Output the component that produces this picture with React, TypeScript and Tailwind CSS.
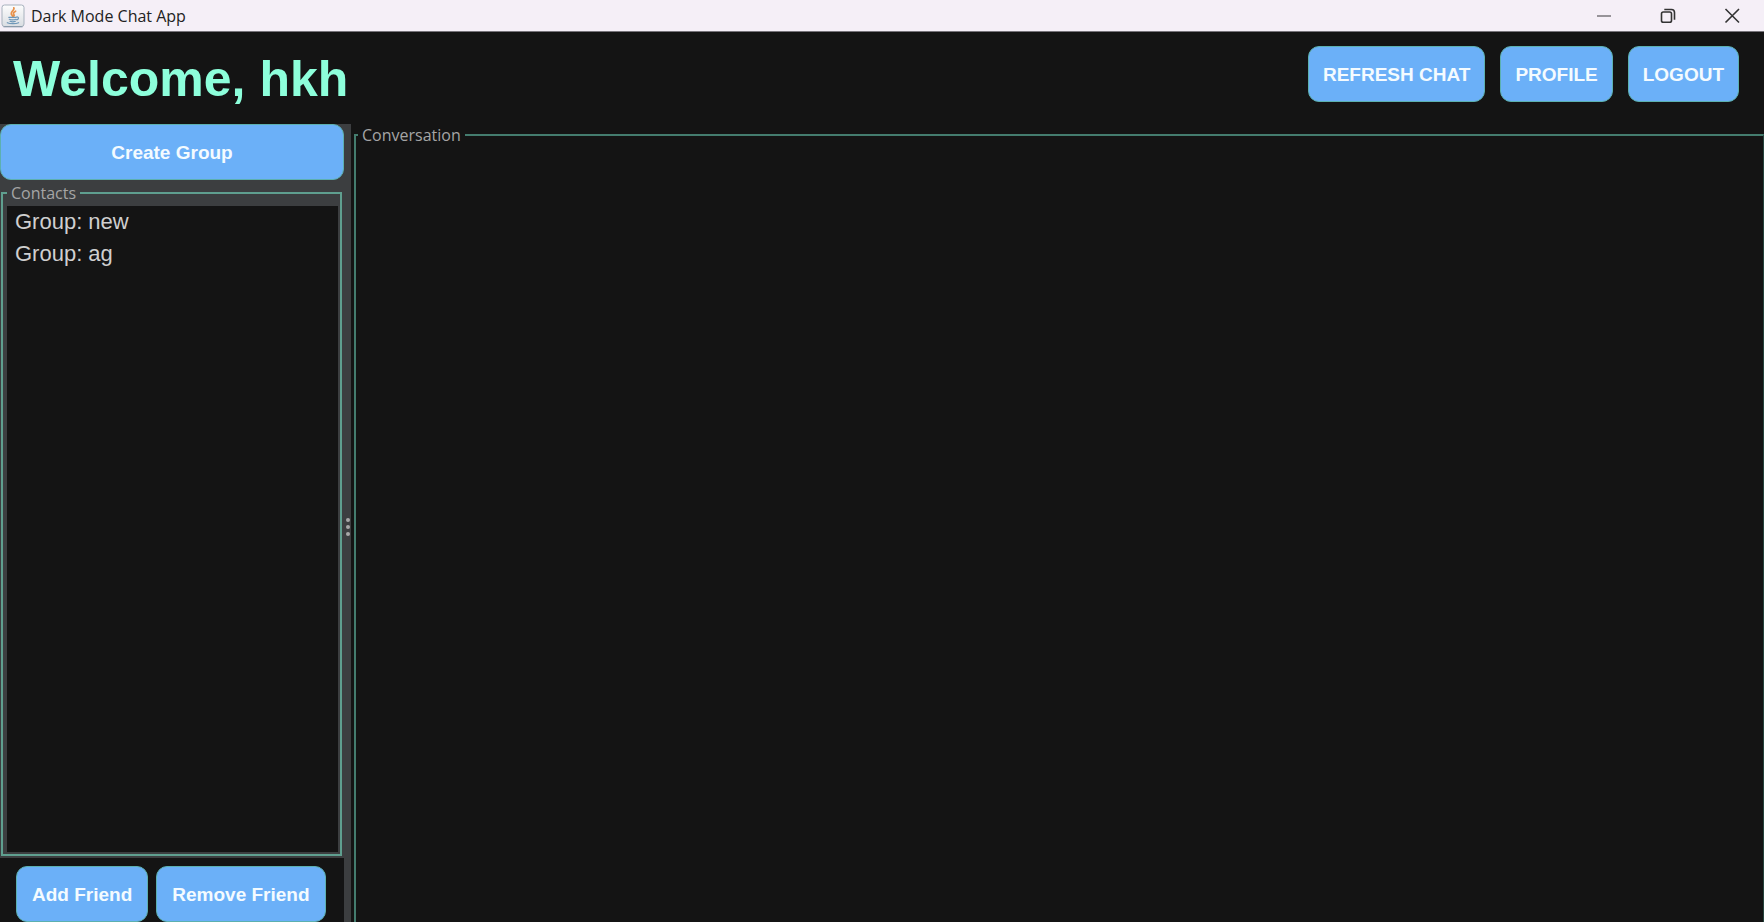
import React, { useState } from 'react';
import clsx from 'clsx';

const CONTACTS = ['Group: new', 'Group: ag'];

const ChatButton: React.FC<{ children: React.ReactNode; className?: string }> = ({ children, className }) => (
    <button
        type="button"
        className={clsx(
            'h-14 rounded-[11px] border border-[#5cb0b0] bg-[#6bb0f8] pt-0.5 text-[19px] font-bold leading-6 text-[#f4fbff]',
            className
        )}
    >
        {children}
    </button>
);

const JavaIcon: React.FC = () => (
    <svg width="24" height="24" viewBox="0 0 24 24" fill="none" aria-hidden="true">
        <defs>
            <linearGradient id="tile" x1="0" y1="0" x2="0" y2="1">
                <stop offset="0" stopColor="#fdfdfd" />
                <stop offset="1" stopColor="#d9dde2" />
            </linearGradient>
        </defs>
        <rect x="1" y="1" width="22" height="21.5" rx="2.5" fill="url(#tile)" stroke="#a7b1bd" />
        <path d="M2.5 22.800h19" stroke="#7f90a3" />
        <path d="M12.800 3.800c1.400 2.200-3.400 3.600-2.600 6 .3.900 1.200 1.700 1.500 2.600M14.600 7.200c-2 1-2.800 2-1.700 3.300.5.700.3 1.300-.3 1.900" stroke="#e8914a" strokeWidth="1.700" strokeLinecap="round" />
        <path d="M7.800 13.300h7.400M8.300 15.300c1.800.8 4.800.7 6.700 0M9 17.300c1.600.6 3.900.6 5.400 0M15.500 13c2.600-.5 2.600 2.200.3 2.900" stroke="#6f97b8" strokeWidth="1.200" strokeLinecap="round" />
        <path d="M6.300 18.700c2.600 1.300 8.700 1.300 11.300 0" stroke="#6f97b8" strokeWidth="1.200" strokeLinecap="round" />
    </svg>
);

const TitleBar: React.FC = () => (
    <div className="flex h-8 shrink-0 items-center justify-between border-b border-[#77747a] bg-[#f5eff7] pl-px">
        <div className="flex items-center gap-1.5">
            <JavaIcon />
            <span className="font-['Open_Sans',sans-serif] text-base leading-6 text-[#222]">Dark Mode Chat App</span>
        </div>
        <div className="flex h-full text-[#333]">
            <button type="button" aria-label="Minimize" className="flex w-16 items-center justify-center">
                <svg width="16" height="16" viewBox="0 0 16 16" stroke="#77747a" strokeWidth="1.5"><path d="M1 8h14" /></svg>
            </button>
            <button type="button" aria-label="Restore" className="flex w-16 items-center justify-center">
                <svg width="16" height="16" viewBox="0 0 16 16" fill="none" stroke="currentColor" strokeWidth="1.6">
                    <rect x="1.5" y="4" width="10" height="10.300" rx="1.800" />
                    <path d="M4.300 1.500h7.200a3 3 0 0 1 3 3v7.200" />
                </svg>
            </button>
            <button type="button" aria-label="Close" className="flex w-16 items-center justify-center">
                <svg width="16" height="16" viewBox="0 0 16 16" stroke="currentColor" strokeWidth="1.6"><path d="M1.500 1l13.500 13.500M15 1L1.500 14.500" /></svg>
            </button>
        </div>
    </div>
);

const Sidebar: React.FC = () => {
    const [selected, setSelected] = useState<string | null>(null);

    return (
        <aside className="flex w-[344px] shrink-0 flex-col bg-[#3c3e40]">
            <ChatButton className="mb-0.5 shrink-0">Create Group</ChatButton>
            <fieldset className="mb-0.5 ml-px mr-0.5 flex min-h-0 flex-1 flex-col border-2 border-[#5f9f8f] pb-0.5 pl-1 pr-0.5 pt-0.5">
                <legend className="px-1 font-['Open_Sans',sans-serif] text-base leading-[22px] text-[#a5a5a5]">Contacts</legend>
                <ul className="flex-1 overflow-y-auto bg-[#141414]">
                    {CONTACTS.map(name => (
                        <li key={name}>
                            <button
                                type="button"
                                onClick={() => setSelected(name)}
                                className={clsx('block h-8 w-full px-2 text-left text-[22px] leading-8 text-[#cfcfcf]', selected === name && 'bg-[#2d4a63]')}
                            >
                                {name}
                            </button>
                        </li>
                    ))}
                </ul>
            </fieldset>
            <div className="flex shrink-0 gap-2 bg-[#141414] pl-4 pt-2">
                <ChatButton className="px-[15px]">Add Friend</ChatButton>
                <ChatButton className="px-[15px]">Remove Friend</ChatButton>
            </div>
        </aside>
    );
};

export default function App() {
    return (
        <div className="flex h-screen flex-col overflow-hidden bg-[#141414] font-['Liberation_Sans',Arial,sans-serif]">
            <TitleBar />
            <header className="flex h-[92px] shrink-0 items-start justify-between pl-[13px] pr-[25px] pt-3.5">
                <h1 className="pt-1 text-[50px] font-bold leading-[58px] text-[#8dffdb]">Welcome, hkh</h1>
                <div className="flex gap-[15px]">
                    <ChatButton className="px-3.5">REFRESH CHAT</ChatButton>
                    <ChatButton className="px-3.5">PROFILE</ChatButton>
                    <ChatButton className="px-3.5">LOGOUT</ChatButton>
                </div>
            </header>
            <main className="flex min-h-0 flex-1">
                <Sidebar />
                <div role="separator" aria-orientation="vertical" className="flex w-[7px] shrink-0 flex-col items-center justify-center gap-[3px] bg-[#3c3e40] pt-2">
                    <span className="size-1 rounded-full bg-[#a8a8a8]" />
                    <span className="size-1 rounded-full bg-[#a8a8a8]" />
                    <span className="size-1 rounded-full bg-[#a8a8a8]" />
                </div>
                <fieldset className="ml-[3px] min-w-0 flex-1 border-2 border-b-0 border-r border-[#447c6e] border-r-[#25443d]">
                    <legend className="ml-0.5 px-1 font-['Open_Sans',sans-serif] text-base leading-[22px] text-[#a5a5a5]">Conversation</legend>
                    <div role="log" aria-label="Conversation" />
                </fieldset>
            </main>
        </div>
    );
}
